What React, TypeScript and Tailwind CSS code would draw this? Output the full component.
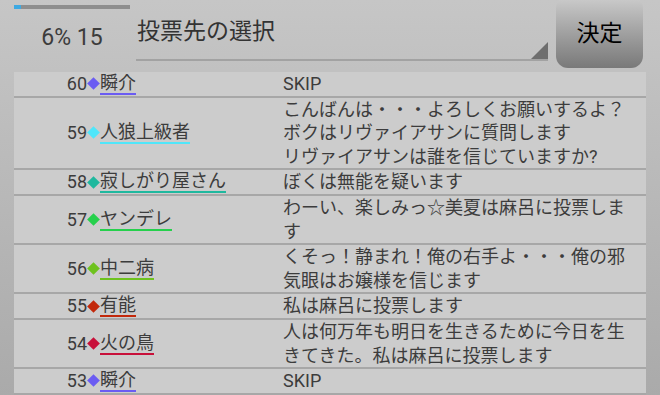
import React from "react";

type Vote = {
  no: number;
  name: string;
  color: string;
  lines: string[];
};

const votes: Vote[] = [
  { no: 60, name: "瞬介", color: "#6b5cf2", lines: ["SKIP"] },
  {
    no: 59,
    name: "人狼上級者",
    color: "#4fe6fa",
    lines: [
      "こんばんは・・・よろしくお願いするよ？",
      "ボクはリヴァイアサンに質問します",
      "リヴァイアサンは誰を信じていますか?",
    ],
  },
  { no: 58, name: "寂しがり屋さん", color: "#1fb89e", lines: ["ぼくは無能を疑います"] },
  { no: 57, name: "ヤンデレ", color: "#26d04c", lines: ["わーい、楽しみっ☆美夏は麻呂に投票しま", "す"] },
  {
    no: 56,
    name: "中二病",
    color: "#6ec21e",
    lines: ["くそっ！静まれ！俺の右手よ・・・俺の邪", "気眼はお嬢様を信じます"],
  },
  { no: 55, name: "有能", color: "#c2280a", lines: ["私は麻呂に投票します"] },
  {
    no: 54,
    name: "火の鳥",
    color: "#c8103a",
    lines: ["人は何万年も明日を生きるために今日を生", "きてきた。私は麻呂に投票します"],
  },
  { no: 53, name: "瞬介", color: "#6b5cf2", lines: ["SKIP"] },
];

function VoteRow({ vote }: { vote: Vote }) {
  return (
    <div className="flex border-b-2 border-[#a7a7a7] leading-[23.6px]">
      <div className="flex w-[269px] shrink-0 items-center pl-[52px]">
        <span className="w-[21px] text-right">{vote.no}</span>
        <span className="flex h-[13px] w-[13px] items-center justify-center">
          <span className="block h-[9px] w-[9px] rotate-45" style={{ backgroundColor: vote.color }} />
        </span>
        <span
          className="inline-block border-b-2 leading-[20px]"
          style={{ borderColor: vote.color }}
        >
          {vote.name}
        </span>
      </div>
      <div className="w-[352px]">
        {vote.lines.map((line, i) => (
          <div key={i} className="whitespace-nowrap">
            {line}
          </div>
        ))}
      </div>
    </div>
  );
}

export default function App() {
  return (
    <div
      className="flex h-[395px] w-[660px] flex-col overflow-hidden bg-gradient-to-b from-[#c6c6c6] to-[#aaaaaa] px-[14px] text-[#3c3c3c]"
      style={{ fontFamily: "Roboto, 'Noto Sans CJK JP', sans-serif" }}
    >
      {/* Header */}
      <div className="flex h-[72px] shrink-0">
        <div className="flex w-[116px] flex-col">
          <div className="mt-[5px] flex h-[4px] bg-[#8e8e8e]">
            <div className="w-[7px] bg-[#3ea9e2]" />
          </div>
          <div className="mt-[14px] text-center text-[23px] leading-[30px]">6% 15</div>
        </div>

        <div className="ml-[6px] w-[412px]">
          <div className="relative h-[61px] border-b-2 border-[#a2a2a2]">
            <div className="pl-[1px] pt-[17px] text-[23px] leading-[30px] text-[#333]">投票先の選択</div>
            <svg className="absolute bottom-0 right-0" width="17" height="17" viewBox="0 0 17 17">
              <path d="M17 0V17H0Z" fill="#6e6e6e" />
            </svg>
          </div>
        </div>

        <button className="ml-[8px] mt-[-4px] h-[72px] w-[87px] rounded-[12px] bg-gradient-to-b from-[#cdcdcd] to-[#797979] pt-[5px] text-[23px] text-black">
          決定
        </button>
      </div>

      {/* Vote list */}
      <div className="grow bg-[#cccccc] text-[18px]">
        {votes.map((v) => (
          <VoteRow key={v.no} vote={v} />
        ))}
      </div>
    </div>
  );
}
